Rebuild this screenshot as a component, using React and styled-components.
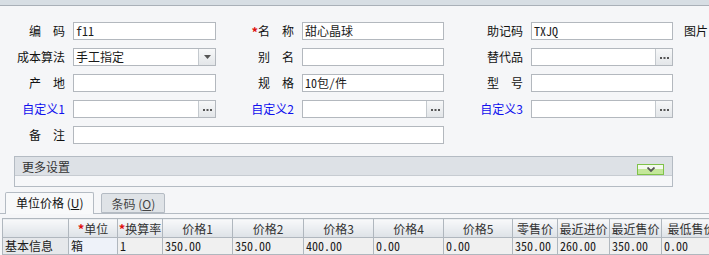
import React from 'react';
import styled, { createGlobalStyle } from 'styled-components';

const GlobalStyle = createGlobalStyle`
  html, body {
    margin: 0;
    padding: 0;
    background: #f5f6f8;
    overflow: hidden;
  }
  body {
    font-family: "Noto Sans CJK SC", "Liberation Sans", sans-serif;
    font-size: 12px;
    color: #111;
  }
`;

const valueFont = `"Noto Sans Mono CJK SC", "Noto Sans CJK SC", "Liberation Mono", monospace`;

const Page = styled.div`
  width: 709px;
  height: 255px;
  overflow: hidden;
`;

const TopStrip = styled.div`
  height: 5px;
  background: #d7dee4;
  border-bottom: 1px solid #a9b0b8;
`;

const Form = styled.div`
  display: grid;
  grid-template-columns: 65px 143px 70px 142px 71px 142px auto;
  grid-auto-rows: 18px;
  column-gap: 8px;
  row-gap: 8px;
  padding-top: 16px;
`;

const Label = styled.div`
  display: flex;
  align-items: center;
  justify-content: flex-end;
  white-space: nowrap;
  line-height: 18px;
  color: ${(p) => (p.$custom ? '#1010ee' : '#111')};
`;

const Star = styled.span`
  color: #e01010;
  font-size: 13px;
  font-weight: bold;
  line-height: 1;
`;

const Extra = styled.div`
  line-height: 18px;
  padding-left: 3px;
  white-space: nowrap;
`;

const Box = styled.div`
  display: flex;
  box-sizing: border-box;
  height: 18px;
  border: 1px solid #b3b8be;
  background: #fff;
  grid-column: ${(p) => p.$span || 'auto'};
`;

const Value = styled.div`
  flex: 1;
  padding-left: 2px;
  line-height: 16px;
  font-family: ${valueFont};
  font-size: 12px;
  color: #1a1a1a;
  white-space: nowrap;
  overflow: hidden;
`;

const FieldButton = styled.div`
  width: 16px;
  border-left: 1px solid #c4c9ce;
  background: linear-gradient(#f7f8f9, #e3e6e9);
  display: flex;
  align-items: center;
  justify-content: center;
`;

const Dots = () => (
  <svg width="9" height="3" viewBox="0 0 9 3">
    <rect x="0" y="1" width="2" height="2" fill="#555" />
    <rect x="3.5" y="1" width="2" height="2" fill="#555" />
    <rect x="7" y="1" width="2" height="2" fill="#555" />
  </svg>
);

const Caret = () => (
  <svg width="7" height="4" viewBox="0 0 7 4">
    <path d="M0 0 H7 L3.5 4 Z" fill="#555" />
  </svg>
);

function Field({ value, button, span }) {
  return (
    <Box $span={span}>
      <Value>{value}</Value>
      {button === 'dots' && <FieldButton><Dots /></FieldButton>}
      {button === 'caret' && <FieldButton><Caret /></FieldButton>}
    </Box>
  );
}

const MorePanel = styled.div`
  margin: 12px 0 0 14px;
  width: 659px;
  box-sizing: border-box;
  border: 1px solid #b4bbc3;
  background: #f6f7f9;
`;

const MoreHeader = styled.div`
  height: 18px;
  display: flex;
  align-items: center;
  justify-content: space-between;
  padding: 0 8px 0 7px;
  background: #dde1e6;
  border-bottom: 1px solid #c7ccd2;
  color: #333;
`;

const MoreBody = styled.div`
  height: 10px;
`;

const ToggleButton = styled.div`
  width: 25px;
  height: 9px;
  margin-top: 6px;
  border: 1px solid #7fc24a;
  background: linear-gradient(#f4f9ee 0 45%, #c4e79a 45% 100%);
  display: flex;
  align-items: center;
  justify-content: center;
`;

const Chevron = () => (
  <svg width="8" height="5" viewBox="0 0 8 5">
    <path d="M0.5 0.5 L4 4 L7.5 0.5" stroke="#555" strokeWidth="1.8" fill="none" />
  </svg>
);

const TabBar = styled.div`
  display: flex;
  align-items: flex-end;
  gap: 7px;
  margin-top: 5px;
  padding-left: 5px;
  height: 21px;
  border-bottom: 1px solid #b4bbc3;
`;

const Tab = styled.div`
  box-sizing: border-box;
  height: ${(p) => (p.$active ? '22px' : '20px')};
  margin-bottom: ${(p) => (p.$active ? '-1px' : '0')};
  padding: 0 ${(p) => (p.$active ? '10px' : '9px')};
  border: 1px solid #b4bbc3;
  border-bottom: ${(p) => (p.$active ? 'none' : '1px solid #b4bbc3')};
  border-radius: 2px 2px 0 0;
  background: ${(p) => (p.$active ? '#f8f9fa' : '#dfe3e7')};
  color: ${(p) => (p.$active ? '#111' : '#444')};
  line-height: 20px;
  white-space: nowrap;
`;

const TableWrap = styled.div`
  margin: 4px 0 0 2px;
`;

const Grid = styled.table`
  border-collapse: collapse;
  table-layout: fixed;
  width: 719px;
`;

const HeadCell = styled.th`
  height: 18px;
  padding: 0;
  border: 1px solid #b0b7be;
  background: linear-gradient(#f8f9fa, #dde2e7);
  font-weight: normal;
  color: #333;
  text-align: center;
  white-space: nowrap;
  overflow: hidden;
`;

const Cell = styled.td`
  height: 16px;
  padding: 0 0 0 2px;
  border: 1px solid #b0b7be;
  background: ${(p) => p.$bg || '#f0f0f0'};
  font-family: ${(p) => (p.$cjk ? 'inherit' : valueFont)};
  color: #1a1a1a;
  white-space: nowrap;
  overflow: hidden;
  line-height: 16px;
`;

const columns = [
  { w: 66, title: '' },
  { w: 49, title: '单位', req: true },
  { w: 45, title: '换算率', req: true },
  { w: 70, title: '价格1' },
  { w: 71, title: '价格2' },
  { w: 70, title: '价格3' },
  { w: 70, title: '价格4' },
  { w: 69, title: '价格5' },
  { w: 45, title: '零售价' },
  { w: 52, title: '最近进价' },
  { w: 52, title: '最近售价' },
  { w: 60, title: '最低售价' },
];

const row = ['1', '350.00', '350.00', '400.00', '0.00', '0.00', '350.00', '260.00', '350.00', '0.00'];

export default function App() {
  return (
    <Page>
      <GlobalStyle />
      <TopStrip />
      <Form>
        <Label>编　码</Label>
        <Field value="f11" />
        <Label><Star>*</Star>名　称</Label>
        <Field value="甜心晶球" />
        <Label>助记码</Label>
        <Field value="TXJQ" />
        <Extra>图片</Extra>

        <Label>成本算法</Label>
        <Field value="手工指定" button="caret" />
        <Label>别　名</Label>
        <Field />
        <Label>替代品</Label>
        <Field button="dots" />
        <div />

        <Label>产　地</Label>
        <Field />
        <Label>规　格</Label>
        <Field value="10包/件" />
        <Label>型　号</Label>
        <Field />
        <div />

        <Label $custom>自定义1</Label>
        <Field button="dots" />
        <Label $custom>自定义2</Label>
        <Field button="dots" />
        <Label $custom>自定义3</Label>
        <Field button="dots" />
        <div />

        <Label>备　注</Label>
        <Field span="2 / 5" />
      </Form>

      <MorePanel>
        <MoreHeader>
          <span>更多设置</span>
          <ToggleButton><Chevron /></ToggleButton>
        </MoreHeader>
        <MoreBody />
      </MorePanel>

      <TabBar>
        <Tab $active>单位价格 (<u>U</u>)</Tab>
        <Tab>条码 (<u>O</u>)</Tab>
      </TabBar>

      <TableWrap>
        <Grid>
          <colgroup>
            {columns.map((c, i) => <col key={i} style={{ width: c.w }} />)}
          </colgroup>
          <thead>
            <tr>
              {columns.map((c, i) => (
                <HeadCell key={i}>{c.req && <Star>*</Star>}{c.title}</HeadCell>
              ))}
            </tr>
          </thead>
          <tbody>
            <tr>
              <Cell $cjk $bg="#e6e8eb">基本信息</Cell>
              <Cell $cjk $bg="#eef2f9">箱</Cell>
              {row.map((v, i) => <Cell key={i}>{v}</Cell>)}
            </tr>
          </tbody>
        </Grid>
      </TableWrap>
    </Page>
  );
}
